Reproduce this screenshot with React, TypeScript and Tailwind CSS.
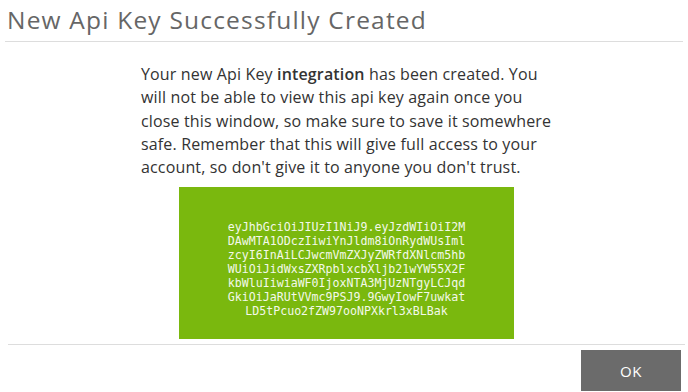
import React from "react";

const keyLines = [
  "eyJhbGciOiJIUzI1NiJ9.eyJzdWIiOiI2M",
  "DAwMTA1ODczIiwiYnJldm8iOnRydWUsIml",
  "zcyI6InAiLCJwcmVmZXJyZWRfdXNlcm5hb",
  "WUiOiJidWxsZXRpblxcbXljb21wYW55X2F",
  "kbWluIiwiaWF0IjoxNTA3MjUzNTgyLCJqd",
  "GkiOiJaRUtVVmc9PSJ9.9GwyIowF7uwkat",
  "LD5tPcuo2fZW97ooNPXkrl3xBLBak",
];

export default function App() {
  return (
    <div
      className="w-[688px] h-[392px] bg-white overflow-hidden flex flex-col"
      style={{ fontFamily: '"Open Sans", "Liberation Sans", sans-serif' }}
    >
      <div className="px-[5px] pt-[1px]">
        <h1 className="text-[24.5px] tracking-[1.2px] leading-[38px] text-[#666666] pl-[2px] border-b border-[#dddddd] h-[41px]">
          New Api Key Successfully Created
        </h1>
      </div>
      <div className="w-[414px] ml-[141px] mt-[21px] text-[16px] tracking-[0.15px] leading-[23.3px] text-[#333333]">
        Your new Api Key <b className="font-semibold">integration</b> has been created. You will not be able to view this api key again once you close this window, so make sure to save it somewhere safe. Remember that this will give full access to your account, so don't give it to anyone you don't trust.
      </div>
      <div className="mt-[8px] ml-[179px] w-[335px] h-[152px] pt-[11px] bg-[#7ab80e] flex flex-col items-center justify-center">
        {keyLines.map((l) => (
          <div
            key={l}
            className="text-[11.6px] leading-[14px] text-[#f4f9ea]"
            style={{ fontFamily: '"DejaVu Sans Mono", monospace' }}
          >
            {l}
          </div>
        ))}
      </div>
      <div className="mt-[5px] mx-[8px] mr-[3px] border-t border-[#dddddd]" />
      <div className="flex justify-end pr-[7px] pt-[5px]">
        <button className="w-[100px] h-[41px] bg-[#6b6b6b] text-white text-[15px] tracking-[0.5px]">
          OK
        </button>
      </div>
    </div>
  );
}
